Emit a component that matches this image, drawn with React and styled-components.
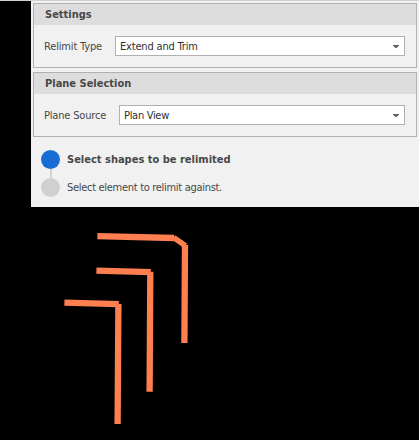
import React from 'react';
import styled, { createGlobalStyle } from 'styled-components';

const GlobalStyle = createGlobalStyle`
  * { box-sizing: border-box; }
  body { margin: 0; background: #000; }
`;

const Screen = styled.div`
  width: 419px;
  height: 440px;
  overflow: hidden;
  display: flex;
  flex-direction: column;
  background: #000;
  border-top: 1px solid #d0d0d0;
  color: #484848;
  font: 11px/16px 'DejaVu Sans Condensed', 'DejaVu Sans', sans-serif;
  font-stretch: condensed;
`;

const Panel = styled.section`
  height: 206px;
  margin-left: 31px;
  padding: 2px 2px 0;
  display: flex;
  flex-direction: column;
  gap: 4px;
  background: #f1f1f1;
`;

const Group = styled.fieldset`
  min-width: 0;
  height: 65px;
  margin: 0;
  padding: 0;
  border: 1px solid #b0b0b0;
`;

const GroupHeader = styled.header`
  height: 21px;
  padding: 1px 0 0 11px;
  background: #dddddd;
`;

const Text = styled.span`
  display: block;
  padding-top: 2px;
  white-space: nowrap;
  font-weight: ${(p) => (p.$bold ? 700 : 400)};
  letter-spacing: ${(p) => p.$spacing || 0}px;
`;

const StepText = styled(Text)`
  padding-top: 0;
`;

const Field = styled.div`
  display: grid;
  grid-template-columns: ${(p) => p.$label}px 1fr;
  align-items: center;
  height: 20px;
  margin: 11px 11px 0 10px;
`;

const Select = styled.div`
  display: flex;
  align-items: center;
  justify-content: space-between;
  height: 20px;
  padding: 0 5px 0 4px;
  border: 1px solid #b0b0b0;
  background: #fff;
  color: #303030;
`;

const Steps = styled.div`
  display: flex;
  flex-direction: column;
  padding: 9px 0 0 8px;
`;

const Step = styled.div`
  display: flex;
  align-items: center;
  gap: 7px;
  height: 19px;
`;

const StepDot = styled.span`
  width: 19px;
  height: 19px;
  border-radius: 50%;
  background: ${(p) => (p.$active ? '#186dd5' : '#d0d0d0')};
`;

const StepLine = styled.span`
  width: 2px;
  height: 9px;
  margin-left: 9px;
  background: #d0d0d0;
`;

const Canvas = styled.svg`
  display: block;
  width: 419px;
  height: 233px;
`;

const Arrow = () => (
  <svg width="6" height="3" viewBox="0 0 6 3">
    <path d="M0 0H6V0.6L3.6 3H2.4L0 0.6Z" fill="#606060" />
  </svg>
);

const SettingsGroup = ({ title, label, labelWidth, labelSpacing, value, valueSpacing }) => (
  <Group>
    <GroupHeader><Text $bold>{title}</Text></GroupHeader>
    <Field $label={labelWidth}>
      <Text $spacing={labelSpacing}>{label}</Text>
      <Select>
        <Text $spacing={valueSpacing}>{value}</Text>
        <Arrow />
      </Select>
    </Field>
  </Group>
);

export default function App() {
  return (
    <Screen>
      <GlobalStyle />
      <Panel>
        <SettingsGroup
          title="Settings"
          label="Relimit Type"
          labelWidth={71}
          labelSpacing={-0.16}
          value="Extend and Trim"
          valueSpacing={-0.18}
        />
        <SettingsGroup
          title="Plane Selection"
          label="Plane Source"
          labelWidth={75}
          labelSpacing={-0.18}
          value="Plan View"
          valueSpacing={-0.3}
        />
        <Steps>
          <Step><StepDot $active /><StepText $bold>Select shapes to be relimited</StepText></Step>
          <StepLine />
          <Step><StepDot /><StepText $spacing={-0.3}>Select element to relimit against.</StepText></Step>
        </Steps>
      </Panel>
      <Canvas viewBox="0 207 419 233">
        <g fill="none" stroke="#ff7f50" strokeWidth="6.3">
          <path d="M97.4 236.1L174 238" />
          <path d="M173.5 237.5L185.5 245.8" strokeWidth="5.5" />
          <path d="M185 245L184.4 343" />
          <path d="M96.4 270.6L150.8 272.2" />
          <path d="M150.3 271.7L149.6 391.8" />
          <path d="M64.4 302.6L118.8 304.2" />
          <path d="M118.4 304L117.6 424" />
        </g>
      </Canvas>
    </Screen>
  );
}
